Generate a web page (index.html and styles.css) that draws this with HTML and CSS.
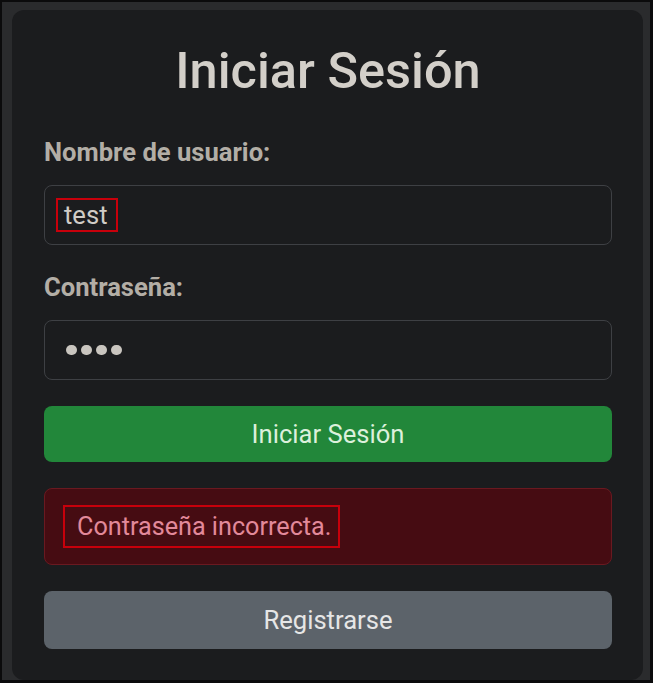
FILE: index.html
```html
<!DOCTYPE html>
<html lang="es">

<head>
  <meta name="viewport" content="width=device-width, initial-scale=1.0" />
  <title>Iniciar Sesión</title>
  <link rel="stylesheet" href="styles.css">
</head>

<body>
  <div class="frame">
    <div class="card">
      <h1 class="title">Iniciar Sesión</h1>
      <form class="login">
        <label class="label">Nombre de usuario:</label>
        <div class="field"><span class="mark mark-user">test</span></div>
        <label class="label">Contraseña:</label>
        <div class="field">
          <span class="dots"><i></i><i></i><i></i><i></i></span>
        </div>
        <button type="button" class="btn btn-success">Iniciar Sesión</button>
        <div class="alert"><span class="mark mark-alert">Contraseña incorrecta.</span></div>
        <button type="button" class="btn btn-secondary">Registrarse</button>
      </form>
    </div>
  </div>
</body>

</html>
```

FILE: styles.css
```css
* {
  padding: 0;
  margin: 0;
  box-sizing: border-box;
}

body {
  background-color: #0b0b0c;
  padding: 2px 3px 3px 2px;
  font-family: Roboto, "Liberation Sans", sans-serif;
}

.frame {
  height: 678px;
  background-color: #2a2b2d;
  padding: 8px 7px 0 10px;
}

.card {
  height: 670px;
  background-color: #1b1c1e;
  border-radius: 12px;
  padding: 0 31px 0 32px;
}

.title {
  padding-top: 31px;
  text-align: center;
  font-size: 50.5px;
  font-weight: 500;
  line-height: 60px;
  color: #d3cfc9;
}

.login {
  display: flex;
  flex-direction: column;
}

.label {
  margin-top: 23px;
  font-size: 25.6px;
  font-weight: 700;
  line-height: 38px;
  color: #b3aea6;
}

.label:first-child {
  margin-top: 32px;
}

.label + .field {
  margin-top: 14px;
}

.field {
  height: 60px;
  border: 1px solid #3e4044;
  border-radius: 8px;
  padding: 0 11px;
  display: flex;
  align-items: center;
  font-size: 25.6px;
  color: #d0ccc6;
}

.mark {
  border: 2px solid #c8000b;
  padding: 0 6px;
}

.mark-user {
  height: 34px;
  line-height: 30px;
  width: 62px;
}

.dots {
  display: flex;
  gap: 4.5px;
  padding-left: 10px;
}

.dots i {
  width: 10.5px;
  height: 10.5px;
  border-radius: 50%;
  background-color: #c9c5bf;
}

.btn {
  border: none;
  border-radius: 8px;
  font-family: inherit;
  font-size: 25.6px;
  text-align: center;
}

.btn-success {
  margin-top: 26px;
  height: 56px;
  background-color: #22873a;
  color: #dcf0dc;
}

.alert {
  margin-top: 26px;
  height: 77px;
  background-color: #460c12;
  border: 1px solid #6a1920;
  border-radius: 8px;
  padding: 0 18px;
  display: flex;
  align-items: center;
  font-size: 25.2px;
  color: #e2899a;
}

.mark-alert {
  height: 43px;
  line-height: 39px;
  padding: 0 7px 0 12px;
}

.btn-secondary {
  margin-top: 26px;
  height: 58px;
  background-color: #5c636a;
  color: #e6e6e6;
}
```
